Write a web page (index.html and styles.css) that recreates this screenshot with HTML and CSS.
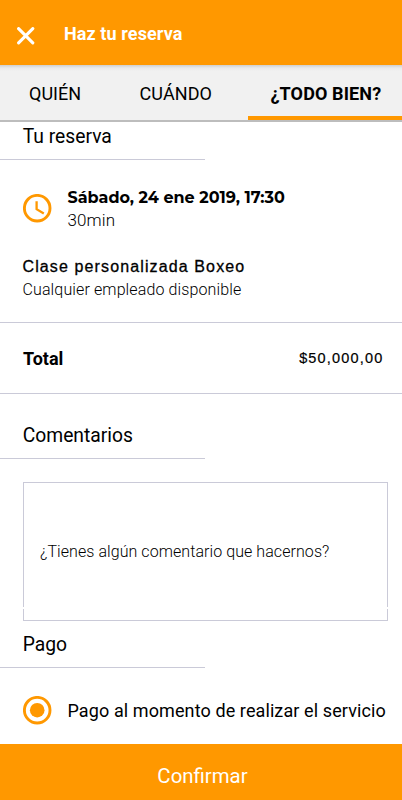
FILE: index.html
```html
<!DOCTYPE html>
<html lang="es">
<head>
<meta charset="utf-8">
<meta name="viewport" content="width=device-width, initial-scale=1">
<title>Haz tu reserva</title>
<link rel="stylesheet" href="styles.css">
</head>
<body>
<div class="screen">
  <header class="appbar">
    <svg class="close" viewBox="0 0 18 18" aria-hidden="true"><path d="M1.6 1.6 15.8 15.8M15.8 1.6 1.6 15.8"/></svg>
    <h1 class="appbar-title">Haz tu reserva</h1>
  </header>
  <nav class="tabs">
    <span class="tab tab-who">QUIÉN</span>
    <span class="tab tab-when">CUÁNDO</span>
    <span class="tab tab-active">¿TODO BIEN?</span>
  </nav>
  <main>
    <h2 class="heading heading-booking">Tu reserva</h2>
    <section class="booking">
      <div class="slot">
        <svg class="icon" viewBox="0 0 29 29" aria-hidden="true"><circle cx="14.2" cy="14.2" r="12.8"/><path d="M13.6 7.2v8l7.2 4.3" class="hands"/></svg>
        <div>
          <p class="date">Sábado, 24 ene 2019, 17:30</p>
          <p class="duration">30min</p>
        </div>
      </div>
      <p class="service">Clase personalizada Boxeo</p>
      <p class="employee">Cualquier empleado disponible</p>
    </section>
    <section class="total">
      <span class="total-label">Total</span>
      <span class="total-amount">$50,000,00</span>
    </section>
    <h2 class="heading heading-comments">Comentarios</h2>
    <div class="comment"><span class="placeholder">¿Tienes algún comentario que hacernos?</span></div>
    <h2 class="heading heading-payment">Pago</h2>
    <div class="payment">
      <svg class="icon" viewBox="0 0 29 29" aria-hidden="true"><circle cx="14.2" cy="14.2" r="12.8"/><circle cx="14.2" cy="14.2" r="7.3" class="dot"/></svg>
      <span class="payment-label">Pago al momento de realizar el servicio</span>
    </div>
  </main>
  <footer class="confirm">Confirmar</footer>
</div>
</body>
</html>
```

FILE: styles.css
```css
* { box-sizing: border-box; margin: 0; padding: 0; }

body {
  font-family: Roboto, sans-serif;
  color: #000;
  background: #fff;
}

.screen {
  width: 402px;
  height: 800px;
  display: flex;
  flex-direction: column;
  overflow: hidden;
  white-space: nowrap;
}

.appbar {
  height: 65px;
  flex: none;
  display: flex;
  align-items: center;
  padding: 2px 0 0 17px;
  background: #ff9800;
  color: #fff;
}

.close {
  width: 18px;
  height: 18px;
  margin-top: 4px;
  fill: none;
  stroke: #fff;
  stroke-width: 3.1;
  stroke-linecap: round;
}

.appbar-title {
  margin-left: 29px;
  font-size: 18px;
  font-weight: 700;
  letter-spacing: 0.1px;
}

.tabs {
  height: 57px;
  flex: none;
  display: flex;
  background: linear-gradient(#cfcfcf, #e9e9e9 3px, #f1f1f1 6px);
  border-bottom: 2px solid #bdbdbd;
}

.tab {
  font-size: 18px;
  line-height: 57px;
}

.tab-who { width: 111px; padding-left: 29px; }
.tab-when { width: 137px; padding-left: 28.5px; letter-spacing: 0.1px; }

.tab-active {
  width: 154px;
  height: 55px;
  padding-left: 22.5px;
  font-weight: 700;
  letter-spacing: 0.12px;
  border-bottom: 4px solid #ff9800;
}

main { flex: 1; }

.heading {
  width: 205px;
  padding-left: 22.7px;
  font-size: 19.3px;
  font-weight: 400;
  border-bottom: 1px solid #cacad8;
}

.heading-booking { height: 38px; line-height: 30px; }
.heading-comments { height: 65px; line-height: 83px; }
.heading-payment { height: 47px; line-height: 48px; }

.booking {
  height: 163px;
  padding: 26px 0 0 22.5px;
  border-bottom: 1px solid #cacad8;
}

.slot {
  height: 69px;
  display: flex;
  gap: 16px;
}

.icon {
  width: 29px;
  height: 29px;
  margin-top: 8px;
  flex: none;
  fill: none;
  stroke: #ff9800;
  stroke-width: 2.9;
}

.hands { stroke-width: 2.3; }
.dot { fill: #ff9800; stroke: none; }

.date {
  font-family: Montserrat, "Open Sans", sans-serif;
  font-size: 16px;
  font-weight: 700;
  line-height: 23px;
}

.duration { font-size: 17px; font-weight: 300; line-height: 23px; letter-spacing: 0.1px; }

.service {
  font-family: "Liberation Sans", sans-serif;
  font-size: 16px;
  line-height: 24px;
  letter-spacing: 1.12px;
  -webkit-text-stroke: 0.3px #000;
}

.employee { font-size: 16px; font-weight: 300; line-height: 21px; letter-spacing: 0.12px; }

.total {
  height: 71px;
  padding: 0 18.5px 0 23px;
  display: flex;
  align-items: center;
  justify-content: space-between;
  border-bottom: 1px solid #cacad8;
}

.total-label { font-size: 18px; font-weight: 700; }

.total-amount {
  font-family: "Liberation Sans", sans-serif;
  font-size: 14.5px;
  letter-spacing: 1.18px;
  -webkit-text-stroke: 0.2px #000;
}

.comment {
  width: 365px;
  height: 139px;
  margin: 23px 0 0 23px;
  padding-left: 16px;
  display: flex;
  align-items: center;
  position: relative;
  border: 1px solid #cacad8;
}

/* Break in the side borders above the bottom edge */
.comment::after {
  content: "";
  position: absolute;
  left: -1px;
  right: -1px;
  bottom: 11px;
  height: 2px;
  background: #fff;
}

.placeholder { font-size: 16px; font-weight: 300; letter-spacing: 0.07px; }

.payment {
  height: 76px;
  padding: 0 0 0 22.5px;
  display: flex;
  align-items: center;
  gap: 16px;
}

.payment .icon { margin-top: 9px; }
.payment-label { margin-top: 8px; font-size: 18px; letter-spacing: 0.1px; }

.confirm {
  height: 56px;
  flex: none;
  background: #ff9800;
  color: #fff;
  font-size: 20.4px;
  line-height: 64px;
  padding-left: 3px;
  text-align: center;
}
```
